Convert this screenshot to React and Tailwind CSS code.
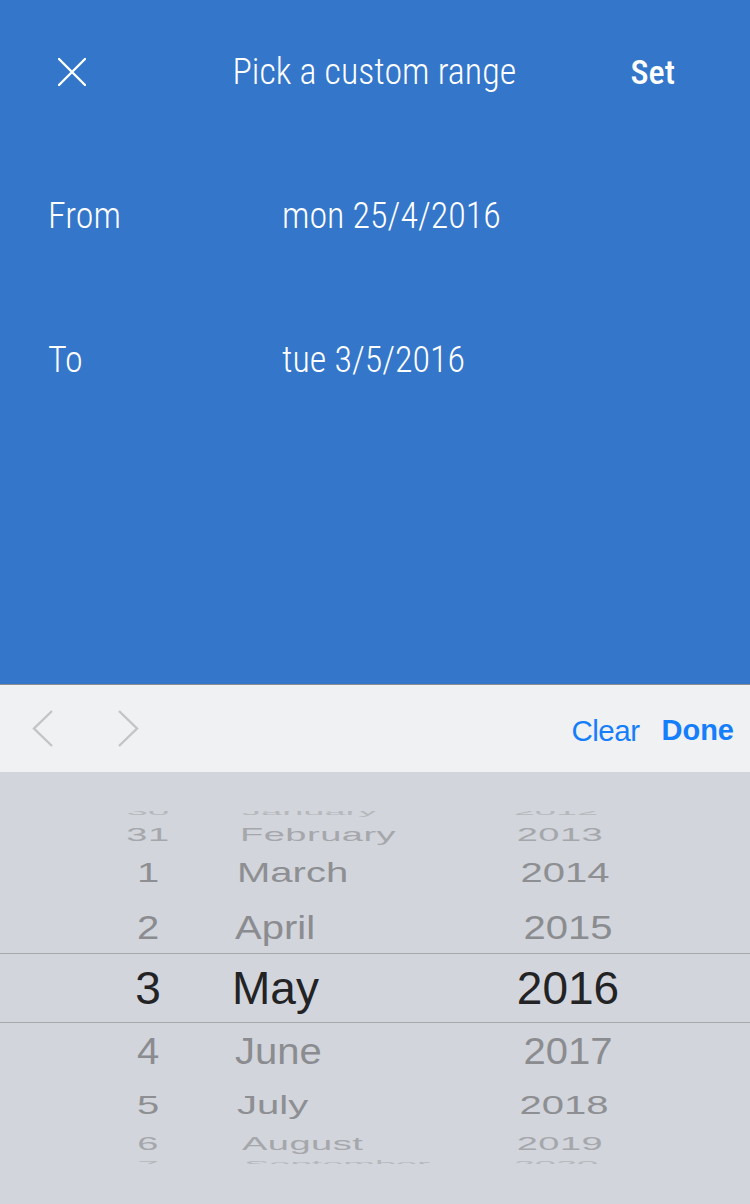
import React from "react";

const rows = [
  { d: "30", m: "January", y: "2012", h: "h-[26px] -mt-[12px]", t: "text-[38px] scale-y-[0.25] text-[#b6b8bc]", mx: "pl-[10px]", yx: "pr-[24px]" },
  { d: "31", m: "February", y: "2013", h: "h-[18px]", t: "text-[38px] scale-y-[0.5] text-[#a5a7ab] tracking-[0.5px]", mx: "pl-[8px]", yx: "pr-[16px]" },
  { d: "1", m: "March", y: "2014", h: "h-[58px]", t: "text-[40px] scale-y-[0.7] text-[#8e8f93]", mx: "pl-[5px]", yx: "pr-[6px]" },
  { d: "2", m: "April", y: "2015", h: "h-[52px]", t: "text-[40px] scale-y-[0.85] text-[#8b8c90]", mx: "pl-[3px]", yx: "" },
  { d: "3", m: "May", y: "2016", h: "h-[70px] border-y border-[#a7a8ac]", t: "text-[46px] text-[#232325]", mx: "", yx: "" },
  { d: "4", m: "June", y: "2017", h: "h-[56px]", t: "text-[40px] scale-y-[0.9] text-[#8b8c90]", mx: "pl-[3px]", yx: "" },
  { d: "5", m: "July", y: "2018", h: "h-[52px]", t: "text-[40px] scale-y-[0.65] text-[#8e8f93]", mx: "pl-[5px]", yx: "pr-[8px]" },
  { d: "6", m: "August", y: "2019", h: "h-[26px]", t: "text-[38px] scale-y-[0.48] text-[#a5a7ab] tracking-[0.5px]", mx: "pl-[10px]", yx: "pr-[16px]" },
  { d: "7", m: "September", y: "2020", h: "h-[14px]", t: "text-[38px] scale-y-[0.22] text-[#b6b8bc]", mx: "pl-[12px]", yx: "pr-[24px]" },
];

function PickerRow({ row }) {
  return (
    <div className={`flex items-center pl-[100px] shrink-0 ${row.h}`}>
      <div className={`w-[96px] text-center leading-none ${row.t}`}>{row.d}</div>
      <div className={`ml-[36px] w-[238px] leading-none whitespace-nowrap ${row.mx} ${row.t}`}>{row.m}</div>
      <div className={`w-[196px] text-center leading-none ${row.yx} ${row.t}`}>{row.y}</div>
    </div>
  );
}

export default function App() {
  return (
    <div className="w-[750px] h-[1204px] flex flex-col overflow-hidden">
      {/* шапка */}
      <div
        className="h-[684px] shrink-0 bg-[#3476c9] text-white font-light font-stretch-condensed"
        style={{ fontFamily: "Roboto, 'Liberation Sans', sans-serif" }}
      >
        <div className="h-[144px] flex items-center pl-[58px] pr-[75px]">
          <svg width="28" height="28" viewBox="0 0 28 28" className="shrink-0">
            <path d="M1 1L27 27M27 1L1 27" stroke="#fff" strokeWidth="2.4" strokeLinecap="round" />
          </svg>
          <div className="flex-1 text-center text-[36px] leading-none pl-[32px]">Pick a custom range</div>
          <div className="text-[34px] leading-none font-medium">Set</div>
        </div>
        <div className="h-[144px] flex items-center pl-[48px]">
          <div className="w-[234px] text-[36px] leading-none">From</div>
          <div className="text-[36px] leading-none">mon 25/4/2016</div>
        </div>
        <div className="h-[144px] flex items-center pl-[48px]">
          <div className="w-[234px] text-[36px] leading-none">To</div>
          <div className="text-[36px] leading-none">tue 3/5/2016</div>
        </div>
      </div>

      {/* панель */}
      <div
        className="h-[88px] shrink-0 border-t border-[#8e8e90] bg-[#f0f1f3] flex items-center pl-[32px] pr-[16px]"
        style={{ fontFamily: "'Liberation Sans', Arial, sans-serif" }}
      >
        <svg width="22" height="38" viewBox="0 0 22 38">
          <path d="M20 1L2 18.5L20 36" fill="none" stroke="#c4c4c6" strokeWidth="2.4" />
        </svg>
        <svg width="22" height="38" viewBox="0 0 22 38" className="ml-[63px]">
          <path d="M2 1L20 18.5L2 36" fill="none" stroke="#c4c4c6" strokeWidth="2.4" />
        </svg>
        <div className="ml-auto pt-[4px] text-[29.5px] leading-none text-[#157efb] tracking-[-0.5px]">Clear</div>
        <div className="ml-[22px] pt-[4px] text-[29px] leading-none font-bold text-[#157efb]">Done</div>
      </div>

      {/* барабан */}
      <div
        className="h-[432px] shrink-0 bg-[#d2d5db] flex flex-col overflow-hidden"
        style={{ fontFamily: "'Liberation Sans', Arial, sans-serif" }}
      >
        <div className="h-[39px] shrink-0" />
        <div className="h-[353px] shrink-0 overflow-hidden flex flex-col">
          {rows.map((r) => (
            <PickerRow key={r.y} row={r} />
          ))}
        </div>
      </div>
    </div>
  );
}
